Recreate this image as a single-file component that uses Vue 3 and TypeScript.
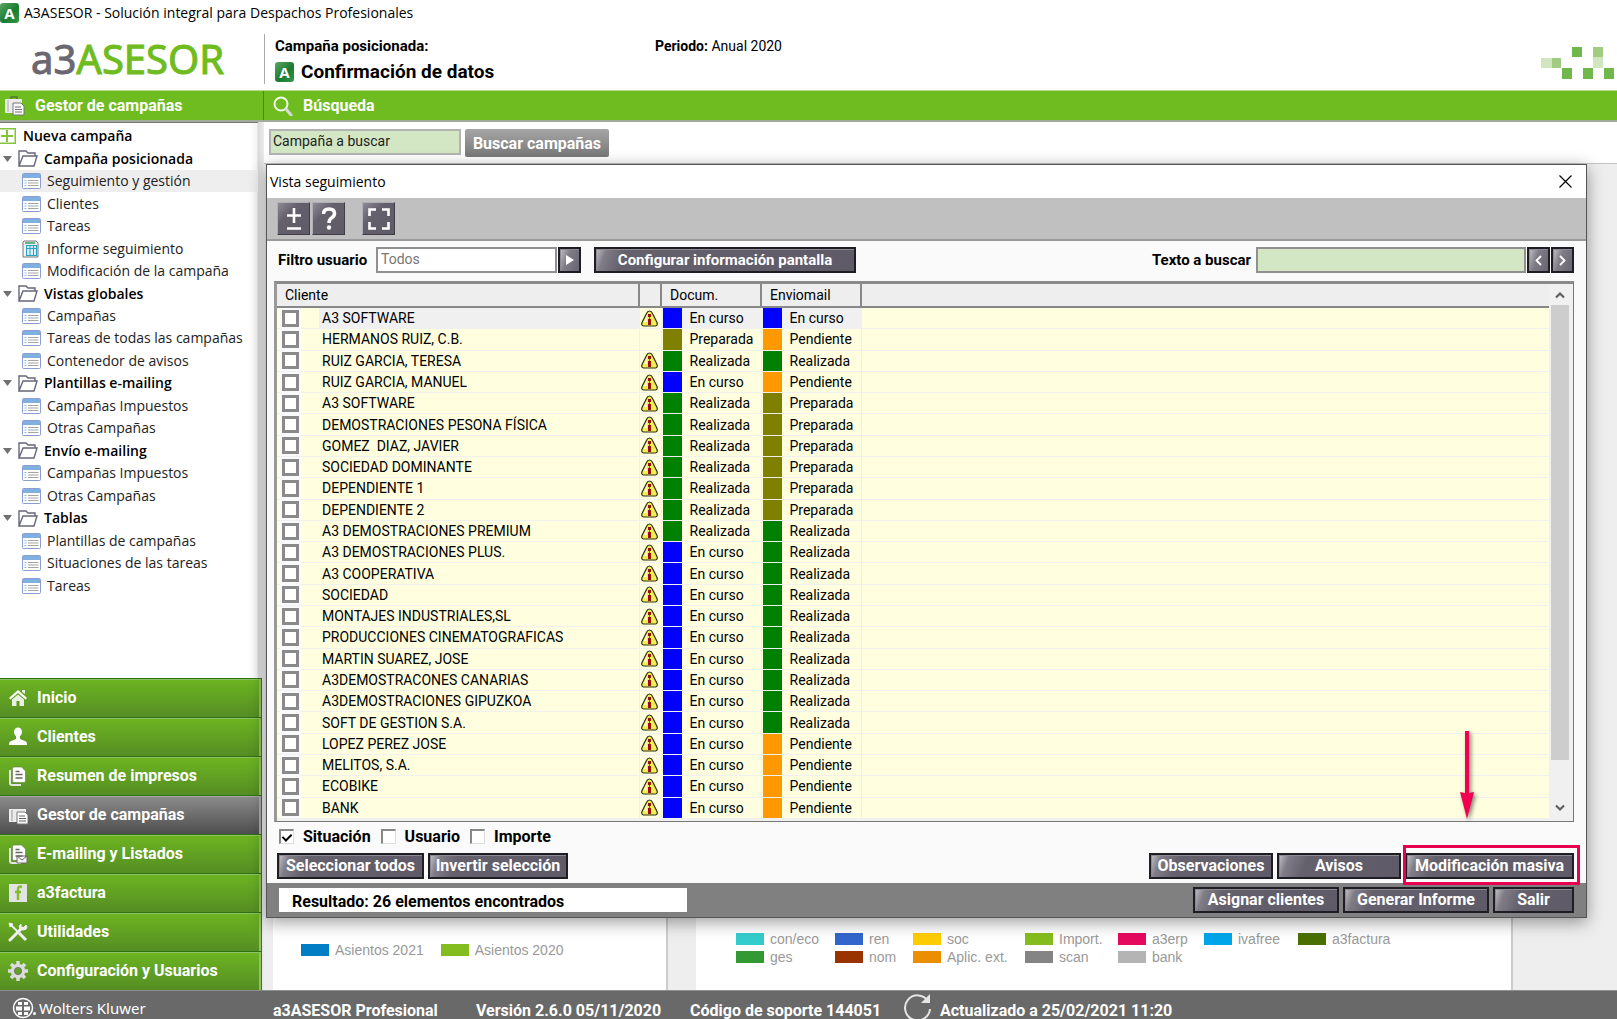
<script setup lang="ts">
import { ref } from 'vue'

type Estado = 'En curso' | 'Preparada' | 'Realizada' | 'Pendiente'
interface Nodo { texto: string; tipo: 'nueva' | 'carpeta' | 'vista' | 'informe'; activo?: boolean }
interface Cliente { nombre: string; aviso: boolean; docum: Estado; envio: Estado }

const arbol: Nodo[] = [
  { texto: 'Nueva campaña', tipo: 'nueva' },
  { texto: 'Campaña posicionada', tipo: 'carpeta' },
  { texto: 'Seguimiento y gestión', tipo: 'vista', activo: true },
  { texto: 'Clientes', tipo: 'vista' },
  { texto: 'Tareas', tipo: 'vista' },
  { texto: 'Informe seguimiento', tipo: 'informe' },
  { texto: 'Modificación de la campaña', tipo: 'vista' },
  { texto: 'Vistas globales', tipo: 'carpeta' },
  { texto: 'Campañas', tipo: 'vista' },
  { texto: 'Tareas de todas las campañas', tipo: 'vista' },
  { texto: 'Contenedor de avisos', tipo: 'vista' },
  { texto: 'Plantillas e-mailing', tipo: 'carpeta' },
  { texto: 'Campañas Impuestos', tipo: 'vista' },
  { texto: 'Otras Campañas', tipo: 'vista' },
  { texto: 'Envío e-mailing', tipo: 'carpeta' },
  { texto: 'Campañas Impuestos', tipo: 'vista' },
  { texto: 'Otras Campañas', tipo: 'vista' },
  { texto: 'Tablas', tipo: 'carpeta' },
  { texto: 'Plantillas de campañas', tipo: 'vista' },
  { texto: 'Situaciones de las tareas', tipo: 'vista' },
  { texto: 'Tareas', tipo: 'vista' },
]

const modulos = [
  { texto: 'Inicio', icono: 'inicio' },
  { texto: 'Clientes', icono: 'clientes' },
  { texto: 'Resumen de impresos', icono: 'resumen' },
  { texto: 'Gestor de campañas', icono: 'gestor' },
  { texto: 'E-mailing y Listados', icono: 'emailing' },
  { texto: 'a3factura', icono: 'factura' },
  { texto: 'Utilidades', icono: 'utilidades' },
  { texto: 'Configuración y Usuarios', icono: 'config' },
]
const moduloActivo = ref('gestor')

const fila = (nombre: string, docum: Estado, envio: Estado, aviso = true): Cliente => ({ nombre, aviso, docum, envio })
const clientes: Cliente[] = [
  fila('A3 SOFTWARE', 'En curso', 'En curso'),
  fila('HERMANOS RUIZ, C.B.', 'Preparada', 'Pendiente', false),
  fila('RUIZ GARCIA, TERESA', 'Realizada', 'Realizada'),
  fila('RUIZ GARCIA, MANUEL', 'En curso', 'Pendiente'),
  fila('A3 SOFTWARE', 'Realizada', 'Preparada'),
  fila('DEMOSTRACIONES PESONA FÍSICA', 'Realizada', 'Preparada'),
  fila('GOMEZ  DIAZ, JAVIER', 'Realizada', 'Preparada'),
  fila('SOCIEDAD DOMINANTE', 'Realizada', 'Preparada'),
  fila('DEPENDIENTE 1', 'Realizada', 'Preparada'),
  fila('DEPENDIENTE 2', 'Realizada', 'Preparada'),
  fila('A3 DEMOSTRACIONES PREMIUM', 'Realizada', 'Realizada'),
  fila('A3 DEMOSTRACIONES PLUS.', 'En curso', 'Realizada'),
  fila('A3 COOPERATIVA', 'En curso', 'Realizada'),
  fila('SOCIEDAD', 'En curso', 'Realizada'),
  fila('MONTAJES INDUSTRIALES,SL', 'En curso', 'Realizada'),
  fila('PRODUCCIONES CINEMATOGRAFICAS', 'En curso', 'Realizada'),
  fila('MARTIN SUAREZ, JOSE', 'En curso', 'Realizada'),
  fila('A3DEMOSTRACONES CANARIAS', 'En curso', 'Realizada'),
  fila('A3DEMOSTRACIONES GIPUZKOA', 'En curso', 'Realizada'),
  fila('SOFT DE GESTION S.A.', 'En curso', 'Realizada'),
  fila('LOPEZ PEREZ JOSE', 'En curso', 'Pendiente'),
  fila('MELITOS, S.A.', 'En curso', 'Pendiente'),
  fila('ECOBIKE', 'En curso', 'Pendiente'),
  fila('BANK', 'En curso', 'Pendiente'),
]
const clase = (e: Estado) => e.toLowerCase().replace(' ', '-')

const leyenda = [
  { texto: 'con/eco', color: '#33cccc' }, { texto: 'ren', color: '#3366cc' },
  { texto: 'soc', color: '#ffcc00' }, { texto: 'Import.', color: '#84bd1f' },
  { texto: 'a3erp', color: '#e60a5f' }, { texto: 'ivafree', color: '#00a5ea' },
  { texto: 'a3factura', color: '#4a7000' }, { texto: 'ges', color: '#339933' },
  { texto: 'nom', color: '#993300' }, { texto: 'Aplic. ext.', color: '#eb8f00' },
  { texto: 'scan', color: '#848484' }, { texto: 'bank', color: '#b4b4b4' },
]

const situacion = ref(true)
const usuario = ref(false)
const importe = ref(false)
const busqueda = ref('Campaña a buscar')
const filtro = ref('Todos')
const texto = ref('')
</script>

<template>
  <div class="app">
    <div class="titlebar">
      <span class="badge">A</span>
      <span>A3ASESOR - Solución integral para Despachos Profesionales</span>
    </div>

    <header class="header">
      <div class="logo"><span class="logo-a3">a3</span><span>ASESOR</span></div>
      <div class="context">
        <div class="context-line">
          <b class="context-label">Campaña posicionada:</b>
          <span class="period"><b>Periodo:</b> Anual 2020</span>
        </div>
        <h1><span class="badge">A</span>Confirmación de datos</h1>
      </div>
      <svg class="mosaic" width="74" height="32" viewBox="0 0 74 32" aria-hidden="true">
        <path d="M31 0h10v10H31zM21 21h10v11H21zM42 21h10v11H42zM63 21h10v11H63z" fill="#71b84c" />
        <path d="M11 11h9v10h-9zM52 0h10v10H52z" fill="#a0cd80" />
        <path d="M0 11h11v10H0zM52 10h10v11H52z" fill="#d0e6c1" />
      </svg>
    </header>

    <div class="greenbar">
      <div class="greenbar-side">
        <svg width="22" height="20" viewBox="0 0 22 20" aria-hidden="true">
          <path d="M7 3V1h6v2" fill="none" stroke="#55772f" stroke-width="1.5" />
          <rect x="1" y="3" width="17" height="14" rx="1" fill="#ececec" />
          <path d="M4 4v12" stroke="#aaa" />
          <path d="M9 7h8l3 3v9H9z" fill="#f8f8f8" stroke="#777" />
          <path d="M11 11h6M11 13.500h7M11 16h7" stroke="#777" />
        </svg>
        <span>Gestor de campañas</span>
      </div>
      <div class="greenbar-main">
        <svg width="20" height="20" viewBox="0 0 20 20" aria-hidden="true">
          <circle cx="8" cy="8" r="6.500" fill="none" stroke="#f4fbe9" stroke-width="2" />
          <path d="M13 13l5 6" stroke="#d9d9d9" stroke-width="3" stroke-linecap="round" />
        </svg>
        <span>Búsqueda</span>
      </div>
    </div>

    <div class="body">
      <aside class="sidebar">
        <ul class="tree">
          <li v-for="(n, i) in arbol" :key="i" :class="[n.tipo, { activo: n.activo }]">
            <svg v-if="n.tipo === 'nueva'" width="16" height="16" viewBox="0 0 16 16" aria-hidden="true">
              <path d="M0 .5h15.500v15H0M1 8h12M7 2v12" fill="none" stroke="#86c440" stroke-width="2" />
            </svg>
            <template v-else-if="n.tipo === 'carpeta'">
              <svg width="9" height="6" viewBox="0 0 9 6" aria-hidden="true"><path d="M0 0h9L4.500 6z" fill="#707070" /></svg>
              <svg width="20" height="17" viewBox="0 0 20 17" aria-hidden="true">
                <path d="M1 16V1h7l2 2h7v3M1 16L5 6h14l-3 10z" fill="#fff" stroke="#66667a" stroke-width="1.400" />
              </svg>
            </template>
            <svg v-else-if="n.tipo === 'vista'" width="19" height="16" viewBox="0 0 19 16" aria-hidden="true">
              <rect x=".5" y=".5" width="18" height="15" rx="1" fill="#fff" stroke="#8a9dd4" />
              <path d="M1 1h17v4H1z" fill="#7fb0e0" />
              <path d="M2.500 7.500h2M2.500 10h2M2.500 12.500h2" stroke="#86b9ea" />
              <path d="M6 7.500h10.500M6 10h10.500M6 12.500h10.500" stroke="#a5a5a5" />
            </svg>
            <svg v-else width="17" height="18" viewBox="0 0 17 18" aria-hidden="true">
              <path d="M2 1h12l2 2v14H1V2z" fill="#f3f3f3" stroke="#777" />
              <rect x="4.500" y="5.500" width="10" height="10" fill="#d9f0fb" stroke="#2a9fc6" />
              <path d="M4 8.500h10M8 6v9M11.500 6v9" stroke="#2a9fc6" />
              <path d="M3 3h10" stroke="#36a05f" stroke-width="1.500" />
            </svg>
            <a href="#">{{ n.texto }}</a>
          </li>
        </ul>

        <nav class="modules">
          <button v-for="m in modulos" :key="m.icono" type="button" :class="{ activo: m.icono === moduloActivo }" @click="moduloActivo = m.icono">
            <svg width="20" height="20" viewBox="0 0 20 20" aria-hidden="true">
              <g v-if="m.icono === 'inicio'">
                <path d="M10 2l9 8-1.500 1.500L10 5l-7.500 6.500L1 10z" fill="#fff" />
                <path d="M14 2h3v4l-3-2zM4 11.500L10 6.500l6 5V18h-4.500v-5h-3v5H4z" fill="#e9efe2" />
              </g>
              <g v-else-if="m.icono === 'clientes'" fill="#fff">
                <ellipse cx="10" cy="5" rx="4" ry="4.500" /><path d="M8 8h4v4l6 2.500q1 .5 1 3.500H1q0-3 1-3.500L8 12z" />
              </g>
              <g v-else-if="m.icono === 'resumen' || m.icono === 'emailing'">
                <path d="M2 4v13q0 2 2 2h9" fill="none" stroke="#e4e4e4" stroke-width="2" />
                <path d="M6 1h7.500l4 4v10q0 1.500-1.500 1.500H6q-1.500 0-1.500-1.500V2.500Q4.500 1 6 1z" fill="#fff" stroke="#607a45" stroke-width=".6" />
                <path d="M7.500 5.500h4M7.500 8.500h7M7.500 12h7" stroke="#686868" stroke-width="1.500" />
                <path v-if="m.icono === 'emailing'" d="M9 12h10v7H9zl5 4 5-4" fill="#f4f4f4" stroke="#686868" />
              </g>
              <g v-else-if="m.icono === 'gestor'">
                <path d="M1 4h17v13H1z" fill="#ececec" /><path d="M4 5v11" stroke="#999" />
                <path d="M9 7h8l3 3v9H9z" fill="#fff" stroke="#777" />
                <path d="M11 11h6M11 13.500h7M11 16h7" stroke="#666" />
              </g>
              <g v-else-if="m.icono === 'factura'">
                <path d="M1 1h18v18H1z" fill="#e3e3e3" />
                <path d="M14 4q-4-1.500-4 2.500V17M7 9h6" fill="none" stroke="#82bd2a" stroke-width="2.500" />
              </g>
              <g v-else-if="m.icono === 'utilidades'" fill="none" stroke="#efefef">
                <path d="M2 18L14 6" stroke-width="3" stroke-linecap="round" />
                <path d="M18 3l-3 3-2-1V2q-3 2-1 5l3 1q4 0 4-3z" fill="#efefef" />
                <path d="M2 2l8 8" stroke-width="2" /><path d="M11 11l7 7" stroke-width="3" />
                <path d="M1 1l4 1-3 3z" fill="#fff" />
              </g>
              <g v-else>
                <circle cx="10" cy="10" r="5.500" fill="none" stroke="#dcdcdc" stroke-width="3.500" />
                <path d="M10 0v4M10 16v4M0 10h4M16 10h4M3 3l3 3M14 14l3 3M17 3l-3 3M6 14l-3 3" stroke="#dcdcdc" stroke-width="3.500" />
                <circle cx="10" cy="10" r="3.500" fill="none" stroke="#777" />
              </g>
            </svg>
            {{ m.texto }}
          </button>
        </nav>
      </aside>

      <main class="main">
        <form class="search" @submit.prevent>
          <input v-model="busqueda" type="text" aria-label="Campaña a buscar" />
          <button type="submit">Buscar campañas</button>
        </form>
        <div class="desk">
          <section class="panel panel-a">
            <span class="key"><i style="background:#007dc5"></i>Asientos 2021</span>
            <span class="key"><i style="background:#84bd1f"></i>Asientos 2020</span>
          </section>
          <section class="panel panel-b">
            <span v-for="l in leyenda" :key="l.texto" class="key"><i :style="{ background: l.color }"></i>{{ l.texto }}</span>
          </section>
        </div>

        <div class="dialog" role="dialog" aria-labelledby="dlg-title">
          <div class="dialog-title">
            <h2 id="dlg-title">Vista seguimiento</h2>
            <button type="button" aria-label="Cerrar">
              <svg width="13" height="13" viewBox="0 0 13 13"><path d="M.5.5l12 12M12.500.5l-12 12" stroke="#000" stroke-width="1.200" /></svg>
            </button>
          </div>
          <div class="toolbar">
            <button type="button" class="tool" aria-label="Expandir o contraer">
              <svg width="20" height="24" viewBox="0 0 20 24"><path d="M10 1v15M3 8.500h14M3 21.500h14" stroke="#fff" stroke-width="2.600" /></svg>
            </button>
            <button type="button" class="tool" aria-label="Ayuda">
              <svg width="20" height="24" viewBox="0 0 20 24"><path d="M4.500 7q0-5 5.500-5t5.500 4.500q0 2.500-3 4.500-2.500 1.500-2.500 5" fill="none" stroke="#fff" stroke-width="3.500" /><circle cx="10" cy="20.500" r="2.200" fill="#fff" /></svg>
            </button>
            <button type="button" class="tool tool-gap" aria-label="Pantalla completa">
              <svg width="22" height="24" viewBox="0 0 22 24"><path d="M1.500 9V2.500H8M14 2.500h6.500V9M20.500 15v6.500H14M8 21.500H1.500V15" fill="none" stroke="#fff" stroke-width="2.600" /></svg>
            </button>
          </div>

          <div class="content">
            <div class="filters">
              <label for="filtro" class="filter-label">Filtro usuario</label>
              <input id="filtro" v-model="filtro" type="text" class="in-filter" />
              <button type="button" class="btn square" aria-label="Elegir usuario">
                <svg width="8" height="10" viewBox="0 0 8 10"><path d="M0 0l8 5-8 5z" fill="#fff" /></svg>
              </button>
              <button type="button" class="btn w-config">Configurar información pantalla</button>
              <label for="texto" class="push">Texto a buscar</label>
              <input id="texto" v-model="texto" type="text" class="in-text" />
              <button type="button" class="btn square" aria-label="Anterior">
                <svg width="7" height="11" viewBox="0 0 7 11"><path d="M6 1L1.500 5.500 6 10" fill="none" stroke="#fff" stroke-width="1.800" /></svg>
              </button>
              <button type="button" class="btn square" aria-label="Siguiente">
                <svg width="7" height="11" viewBox="0 0 7 11"><path d="M1 1l4.500 4.500L1 10" fill="none" stroke="#fff" stroke-width="1.800" /></svg>
              </button>
            </div>

            <div class="grid">
              <table>
                <colgroup><col class="c-check" /><col class="c-name" /><col class="c-warn" /><col class="c-state" /><col class="c-state" /><col /></colgroup>
                <thead>
                  <tr><th colspan="2">Cliente</th><th></th><th>Docum.</th><th>Enviomail</th><th></th></tr>
                </thead>
                <tbody>
                  <tr v-for="(c, i) in clientes" :key="i" :class="{ sel: i === 0 }">
                    <td class="check"><input type="checkbox" :aria-label="c.nombre" /></td>
                    <td class="name">{{ c.nombre }}</td>
                    <td class="warn">
                      <svg v-if="c.aviso" width="17" height="17" viewBox="0 0 17 17" aria-hidden="true">
                        <path d="M8.500 1q2 0 3 2.500l4.500 9q1 3-1.500 3.500h-12Q0 15.500 1 12.500l4.500-9Q6.500 1 8.500 1z" fill="#f4ee50" stroke="#2c2c18" stroke-width="1.200" />
                        <path d="M6 5l-3 7h3z" fill="#fffbd0" />
                        <path d="M7 4h3v3H7zM7 9h3v6H7z" fill="#991010" />
                        <path d="M8 7h1v2H8z" fill="#c33" />
                      </svg>
                    </td>
                    <td class="state" :class="clase(c.docum)">{{ c.docum }}</td>
                    <td class="state" :class="clase(c.envio)">{{ c.envio }}</td>
                    <td></td>
                  </tr>
                </tbody>
              </table>
              <div class="scroll" aria-hidden="true">
                <svg width="10" height="8" viewBox="0 0 10 8"><path d="M1 6.500l4-4 4 4" fill="none" stroke="#606060" stroke-width="2.200" /></svg>
                <div class="thumb"></div>
                <svg width="10" height="8" viewBox="0 0 10 8"><path d="M1 1.500l4 4 4-4" fill="none" stroke="#606060" stroke-width="2.200" /></svg>
              </div>
            </div>

            <div class="options">
              <label><input v-model="situacion" type="checkbox" />Situación</label>
              <label><input v-model="usuario" type="checkbox" />Usuario</label>
              <label><input v-model="importe" type="checkbox" />Importe</label>
            </div>

            <div class="actions">
              <button type="button" class="btn w-sel">Seleccionar todos</button>
              <button type="button" class="btn w-inv">Invertir selección</button>
              <button type="button" class="btn w-obs push">Observaciones</button>
              <button type="button" class="btn w-obs">Avisos</button>
              <div class="marked">
                <button type="button" class="btn w-mod">Modificación masiva</button>
                <svg class="arrow" width="24" height="92" viewBox="0 0 24 92" aria-hidden="true">
                  <path d="M9 0h4v62l5-1-7 27-7-27 5 1z" fill="#f0004f" />
                </svg>
              </div>
            </div>
          </div>

          <div class="dialog-foot">
            <output>Resultado: 26 elementos encontrados</output>
            <button type="button" class="btn w-asig push">Asignar clientes</button>
            <button type="button" class="btn w-asig">Generar Informe</button>
            <button type="button" class="btn w-salir">Salir</button>
          </div>
        </div>
      </main>
    </div>

    <footer class="footer">
      <div class="brand">
        <svg width="24" height="22" viewBox="0 0 24 22" aria-hidden="true">
          <circle cx="11" cy="11" r="9.500" fill="none" stroke="#fff" stroke-width="1.500" />
          <path d="M6 5h4v3H6zM12 5h4v3h-4zM4 9.500h6v4H4zM12 9.500h6v4h-6zM6 15h4v3H6zM12 15h4v3h-4z" fill="#fff" />
          <circle cx="22.500" cy="16.500" r="1.500" fill="#fff" />
        </svg>
        <span>Wolters Kluwer</span>
      </div>
      <span class="f-app">a3ASESOR Profesional</span>
      <span class="f-ver">Versión 2.6.0 05/11/2020</span>
      <span class="f-sop">Código de soporte 144051</span>
      <svg class="f-ico" width="30" height="26" viewBox="0 0 30 26" aria-hidden="true">
        <path d="M25 8A12.500 12.500 0 1 0 27 16" fill="none" stroke="#e6e6e6" stroke-width="2" />
        <path d="M27 1v9h-9z" fill="#e6e6e6" />
      </svg>
      <span>Actualizado a 25/02/2021 11:20</span>
    </footer>
  </div>
</template>

<style>
body { margin: 0; }
</style>

<style scoped>
* { box-sizing: border-box; }
.app {
  min-height: 100vh;
  display: flex;
  flex-direction: column;
  overflow: hidden;
  background: #fff;
  color: #000;
  font: 14px/20px Roboto, "Liberation Sans", sans-serif;
}
button, input { font: inherit; margin: 0; border-radius: 0; }
button { cursor: pointer; }
svg { flex: none; display: block; }
.push { margin-left: auto; }

.titlebar { height: 26px; display: flex; align-items: center; gap: 5px; font: 14px/20px "Open Sans", "Noto Sans", sans-serif; }
.badge {
  flex: none; width: 19px; height: 20px; border-radius: 3px;
  background: linear-gradient(135deg, #5aa860, #1c7a33 55%, #2f9a45);
  color: #fff; font: bold 15px/20px "Open Sans", sans-serif; text-align: center;
}

.header { height: 64px; display: flex; align-items: flex-start; }
.logo { width: 264px; padding-left: 31px; height: 64px; color: #6fbc20; font: 40px/66px "Noto Sans", sans-serif; -webkit-text-stroke: 1px #6fbc20; }
.logo-a3 { color: #6b6770; -webkit-text-stroke: 1px #6b6770; }
.context { margin-top: 8px; padding: 2px 0 0 10px; height: 50px; flex: 1; border-left: 1px solid #aaa; font-size: 15px; }
.context-line { display: flex; }
.context-label { width: 380px; }
.period { font-size: 14px; }
h1 { margin: 6px 0 0; display: flex; align-items: center; gap: 7px; font: bold 19px/20px Roboto, sans-serif; }
.mosaic { margin: 21px 2px 0 0; }

.greenbar { height: 32px; display: flex; background: #6ebc1f; border-top: 1px solid #b7dd90; border-bottom: 2px solid #a3ab9c; color: #fff; font-weight: bold; font-size: 16px; }
.greenbar-side { width: 264px; padding: 1px 0 0 4px; display: flex; align-items: center; gap: 9px; border-right: 1px solid #4f8717; }
.greenbar-main { flex: 1; padding: 1px 0 0 9px; display: flex; align-items: center; gap: 10px; }

.body { flex: 1; display: flex; }
.sidebar { width: 264px; display: flex; flex-direction: column; justify-content: space-between; background: linear-gradient(90deg, #fff 250px, #f4f4f4 257px, #d8d8d8 258px, #ececec); }
.tree { list-style: none; margin: 0; padding: 2px 0 0; height: 475px; width: 258px; display: flex; flex-direction: column; border-top: 1px solid #777; font: 14px/20px "Open Sans", "Noto Sans", sans-serif; }
.tree li { flex: 1; display: flex; align-items: center; padding-left: 22px; gap: 6px; }
.tree li.nueva { padding-left: 0; gap: 7px; font-weight: 600; }
.tree li.carpeta { padding-left: 3px; gap: 6px; font-weight: 600; }
.tree li.informe { gap: 8px; }
.tree li.activo { background: #eee; }
.tree a { color: #222; text-decoration: none; }
.tree .nueva a, .tree .carpeta a { color: #000; }
.modules { width: 262px; display: flex; flex-direction: column; }
.modules button {
  height: 39px; padding: 0 0 0 8px; display: flex; align-items: center; gap: 9px;
  border: 0; border-right: 1px solid #3b7a15; border-top: 1px solid #2f7212;
  box-shadow: inset -2px 1px 0 #8fc266;
  background: linear-gradient(#6db521, #558d24);
  color: #fff; font-weight: bold; font-size: 16px;
}
.modules button.activo { background: linear-gradient(#8c8c8c, #4e4e4e); box-shadow: inset -2px 1px 0 #aaa; }

.main { flex: 1; min-width: 0; position: relative; display: flex; flex-direction: column; }
.search { height: 42px; padding: 7px 0 0 5px; display: flex; align-items: flex-start; gap: 4px; border-bottom: 1px solid #c4c4c4; }
.search input { width: 192px; height: 26px; padding: 0 2px 2px; border: 2px solid #b3b3b3; background: #d3e7c5; color: #222; }
.search button { width: 144px; height: 28px; padding: 2px 0 0; border: 0; border-radius: 2px; background: linear-gradient(#a6a6a6, #777); color: #fff; font-weight: bold; font-size: 16px; }
.desk { flex: 1; display: flex; align-items: flex-end; gap: 28px; padding: 0 104px 0 9px; background: #eee; color: #999; font: 14px/18px "Liberation Sans", sans-serif; }
.panel { height: 100px; background: #fff; border-right: 2px solid #ccc; }
.panel-a { width: 395px; padding: 51px 0 0 28px; display: flex; gap: 17px; }
.panel-b { flex: 1; padding: 40px 0 0 40px; display: grid; grid-template-columns: 99px 78px 112px 93px 86px 94px 1fr; grid-auto-rows: 18px; align-content: start; }
.key { display: flex; align-items: center; gap: 6px; height: 18px; white-space: nowrap; }
.key i { width: 28px; height: 12px; }

.dialog { position: absolute; top: 42px; left: 2px; right: 30px; border: 1px solid #555; background: #fafafa; box-shadow: 0 4px 16px rgba(0, 0, 0, .4); }
.dialog-title { height: 33px; padding: 0 14px 0 3px; display: flex; align-items: center; justify-content: space-between; background: #fff; }
h2 { margin: 0; font: 14px/20px "Open Sans", "Noto Sans", sans-serif; }
.dialog-title button { padding: 0; border: 0; background: none; }
.toolbar { height: 43px; padding: 4px 10px; display: flex; gap: 2px; background: #c0c0c0; border-bottom: 2px solid #999; }
.tool { width: 33px; height: 33px; padding: 0; display: grid; place-items: center; border: 1px solid #77747e; border-color: #b0aeb6 #3f3c46 #3f3c46 #b0aeb6; background: linear-gradient(135deg, #8e8b95, #64606c 35%, #5e5a67); }
.tool-gap { margin-left: 15px; }

.content { padding: 6px 12px 4px 7px; }
.filters { height: 26px; padding-left: 4px; display: flex; align-items: stretch; gap: 1px; font-weight: bold; font-size: 15px; line-height: 26px; }
.filters input { border: 2px solid #909090; font-weight: normal; }
.filter-label { width: 93px; }
.in-filter { width: 181px; margin-left: 4px; padding: 0 3px 3px; background: #fff; color: #777; font-size: 14px; }
.in-text { width: 270px; margin-left: 4px; background: #d3e7c5; }
.btn {
  height: 26px; padding: 0; white-space: nowrap;
  border: 2px solid #1f1d24; color: #fff; font-weight: bold; font-size: 16px; line-height: 20px;
  background: linear-gradient(110deg, #c4c2c8 0, #807d87 10px, #64606c 28px, #5e5a67);
  box-shadow: inset 1px 1px 0 #8d8a94;
}
.square { width: 23px; display: grid; place-items: center; }
.w-config { width: 262px; margin-left: 12px; font-size: 15px; }
.w-sel { width: 147px; }
.w-inv { width: 140px; }
.w-obs { width: 124px; }
.w-mod { width: 169px; }
.w-asig { width: 146px; }
.w-salir { width: 81px; }

.grid { margin-top: 8px; height: 541px; display: flex; border: 1px solid #777; border-top: 3px solid #8a8a8a; border-left: 3px solid #999; padding: 0 4px 2px 0; background: #f0f0f0; }
table { flex: 1; width: 100%; height: 535px; table-layout: fixed; border-collapse: collapse; background: #ffffdf; }
.c-check { width: 42px; }
.c-name { width: 320px; }
.c-warn { width: 22px; }
.c-state { width: 100px; }
th { height: 23px; padding: 0 8px 1px; text-align: left; font-weight: normal; line-height: 20px; background: #eee; border-right: 2px solid #888; border-bottom: 2px solid #888; }
th:last-child { border-right: 0; }
td { padding: 0; line-height: 18px; border-right: 1px solid #f0f0f0; border-bottom: 1px solid #f0f0f0; }
td.check, td:last-child { border-right: 0; }
td input { appearance: none; display: block; width: 17px; height: 17px; margin-left: 5px; border: 3px solid #8a8a8a; background: #fff; outline: 2px solid #fafafa; }
td.name { padding-left: 3px; white-space: pre; }
td.warn svg { margin: 0 0 0 1px; }
td.state { padding-left: 28px; background-repeat: no-repeat; background-size: 19px 100%; background-position: 1px 0; }
.en-curso { background-image: linear-gradient(#00f, #00f); }
.preparada { background-image: linear-gradient(#808000, #808000); }
.realizada { background-image: linear-gradient(#008000, #008000); }
.pendiente { background-image: linear-gradient(#ff9900, #ff9900); }
.sel .name, .sel .state { background-color: #f0f0f0; }
.scroll { width: 20px; padding: 7px 0 7px 2px; display: flex; flex-direction: column; align-items: center; background: #f0f0f0; }
.thumb { width: 18px; height: 455px; margin: 6px 0 auto; background: #cdcdcd; }

.options { height: 31px; padding: 0 0 2px 5px; display: flex; align-items: center; gap: 10px; font-weight: bold; font-size: 16px; }
.options label { display: flex; align-items: center; gap: 9px; }
.options input { appearance: none; width: 15px; height: 15px; border: 1px solid #ddd; border-top: 2px solid #888; border-left: 2px solid #888; background: #fff; display: grid; place-items: center; }
.options input:checked::before { content: ""; width: 4px; height: 7px; margin-bottom: 2px; border: solid #000; border-width: 0 2px 2px 0; transform: rotate(45deg); }
.actions { display: flex; gap: 4px; padding-left: 3px; }
.marked { position: relative; }
.marked::after { content: ""; position: absolute; inset: -8px -6px -6px -2px; border: 3px solid #e8004f; pointer-events: none; }
.arrow { position: absolute; left: 51px; bottom: 56px; filter: drop-shadow(2px 2px 2px rgba(0, 0, 0, .5)); pointer-events: none; }
.dialog-foot { height: 34px; padding: 0 12px; display: flex; align-items: center; gap: 4px; background: #808080; }
output { width: 408px; height: 24px; padding-left: 13px; background: #fff; font: bold 16px/28px Roboto, sans-serif; overflow: hidden; }

.footer { height: 29px; display: flex; align-items: flex-end; background: #696969; border-top: 1px solid #8e8e8e; color: #fff; font-weight: bold; font-size: 16px; line-height: 16px; white-space: nowrap; }
.brand { width: 273px; padding-left: 12px; display: flex; align-items: center; gap: 3px; font: 15px/20px "Noto Sans", sans-serif; }
.f-app { width: 203px; }
.f-ver { width: 214px; }
.f-sop { width: 213px; }
.f-ico { margin-right: 7px; }
</style>
